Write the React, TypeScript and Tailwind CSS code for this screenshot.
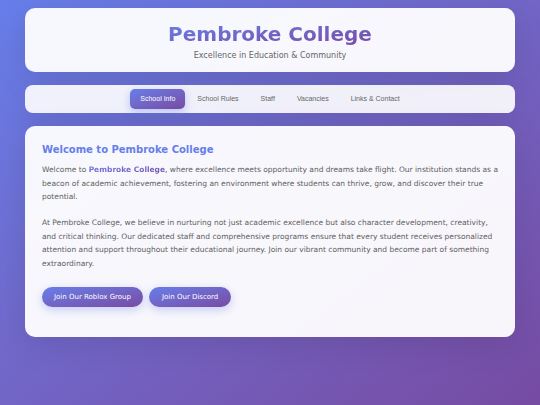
import React from 'react';

const NAV_ITEMS = ['School Info', 'School Rules', 'Staff', 'Vacancies', 'Links & Contact'];

function Header() {
  return (
    <header className="rounded-[10px] bg-white/95 pt-[14px] pb-[11px] text-center shadow-[0_8px_32px_rgba(0,0,0,0.1)]">
      <h1 className="inline-block bg-gradient-to-br from-[#667eea] to-[#764ba2] bg-clip-text text-[20px] font-bold leading-[24px] text-transparent">
        Pembroke College
      </h1>
      <p className="mt-[3px] text-[8px] leading-[10px] text-[#666]">Excellence in Education &amp; Community</p>
    </header>
  );
}

function Nav() {
  return (
    <nav className="flex items-center justify-center gap-[2px] rounded-[8px] bg-white/90 py-[4px] shadow-[0_8px_32px_rgba(0,0,0,0.1)] [font-family:'Liberation_Sans',Arial,sans-serif]">
      {NAV_ITEMS.map((item, i) => (
        <button
          key={item}
          className={
            i === 0
              ? 'h-[20px] rounded-[5px] bg-gradient-to-br from-[#667eea] to-[#764ba2] px-[10px] text-[7px] text-white shadow-[0_3px_8px_rgba(102,126,234,0.4)]'
              : 'h-[20px] rounded-[5px] px-[10px] text-[7px] text-[#666]'
          }
        >
          {item}
        </button>
      ))}
    </nav>
  );
}

function Welcome() {
  return (
    <main className="rounded-[10px] bg-white/95 px-[17px] pt-[18px] pb-[30px] shadow-[0_8px_32px_rgba(0,0,0,0.1)]">
      <h2 className="text-[10px] font-bold leading-[12px] text-[#667eea]">Welcome to Pembroke College</h2>
      <p className="mt-[7px] text-[7.5px] leading-[13.5px] text-[#606060]">
        Welcome to{' '}
        <strong className="bg-gradient-to-br from-[#667eea] to-[#764ba2] bg-clip-text text-transparent">
          Pembroke College
        </strong>
        , where excellence meets opportunity and dreams take flight. Our institution stands as a beacon of academic
        achievement, fostering an environment where students can thrive, grow, and discover their true potential.
      </p>
      <p className="mt-[12.5px] text-[7.5px] leading-[13.5px] text-[#606060]">
        At Pembroke College, we believe in nurturing not just academic excellence but also character development,
        creativity, and critical thinking. Our dedicated staff and comprehensive programs ensure that every student
        receives personalized attention and support throughout their educational journey. Join our vibrant community and
        become part of something extraordinary.
      </p>
      <div className="mt-[17px] flex gap-[6px]">
        <button className="h-[20px] rounded-full bg-gradient-to-br from-[#667eea] to-[#764ba2] px-[12px] text-[7px] text-white shadow-[0_3px_10px_rgba(102,126,234,0.35)]">
          Join Our Roblox Group
        </button>
        <button className="h-[20px] rounded-full bg-gradient-to-br from-[#667eea] to-[#764ba2] px-[13px] text-[7px] text-white shadow-[0_3px_10px_rgba(102,126,234,0.35)]">
          Join Our Discord
        </button>
      </div>
    </main>
  );
}

export default function App() {
  return (
    <div className="min-h-screen bg-gradient-to-br from-[#667eea] to-[#764ba2] px-[25px] pt-[8px] pb-[20px] [font-family:'DejaVu_Sans',Verdana,sans-serif]">
      <div className="flex flex-col gap-[13px]">
        <Header />
        <Nav />
        <Welcome />
      </div>
    </div>
  );
}
